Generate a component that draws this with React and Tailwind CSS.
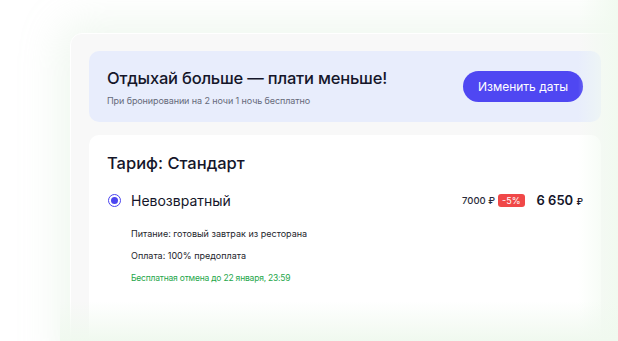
import React from 'react';

export default function App() {
  return (
    <div className="relative w-[618px] h-[341px] overflow-hidden bg-white" style={{ fontFamily: 'Inter, "Noto Sans", sans-serif' }}>
      {/* Outer panel */}
      <div className="absolute left-[70px] top-[33px] w-[580px] h-[340px] rounded-[12px] bg-[#f8f8f8] border border-white shadow-[0_0_40px_10px_rgba(190,225,190,0.25)] pt-[17px] pl-[18px]">
        {/* Promo banner */}
        <div className="w-[512px] h-[71px] rounded-[10px] bg-[#e8edfc] flex items-center justify-between pl-[18px] pr-[18px]">
          <div className="flex flex-col">
            <span className="text-[16.5px] font-medium text-[#15162a] leading-[22px] tracking-[-0.2px]">Отдыхай больше — плати меньше!</span>
            <span className="text-[9px] text-[#666a7a] mt-[6px] leading-[12px] tracking-[-0.1px]">При бронировании на 2 ночи 1 ночь бесплатно</span>
          </div>
          <button className="w-[120px] h-[31px] rounded-full bg-[#4f47f2] text-white text-[12px] leading-none">Изменить даты</button>
        </div>

        {/* Tariff card */}
        <div className="mt-[13px] w-[512px] h-[260px] rounded-[10px] bg-white pt-[17px] pl-[18px] pr-[18px]">
          <div className="text-[16.5px] font-medium text-[#15162a] leading-[22px]">Тариф: Стандарт</div>
          <div className="mt-[17px] flex items-center justify-between">
            <div className="flex items-center">
              <div className="w-[13px] h-[13px] rounded-full border-[1.5px] border-[#4b45f0] flex items-center justify-center ml-[1px]">
                <div className="w-[7px] h-[7px] rounded-full bg-[#4b45f0]" />
              </div>
              <span className="ml-[10px] text-[14px] text-[#15162a] leading-[18px]">Невозвратный</span>
            </div>
            <div className="flex items-center">
              <span className="text-[9.5px] font-medium text-[#2a2b3a]">7000 ₽</span>
              <span className="ml-[3px] h-[13px] px-[4px] rounded-[3px] bg-[#f04848] text-white text-[9px] leading-[13px]">-5%</span>
              <span className="ml-[12px] text-[13px] font-semibold text-[#15162a]">6 650 <span className="text-[9px]">₽</span></span>
            </div>
          </div>
          <div className="ml-[24px] mt-[17px] flex flex-col gap-[10px] text-[9px] leading-[12px]">
            <span className="text-[#1d1e2c]">Питание: готовый завтрак из ресторана</span>
            <span className="text-[#1d1e2c]">Оплата: 100% предоплата</span>
            <span className="text-[#1ea64a] text-[8.5px] tracking-[-0.2px]">Бесплатная отмена до 22 января, 23:59</span>
          </div>
        </div>
      </div>

      {/* Right fade */}
      <div className="absolute right-0 top-0 w-[40px] h-full bg-gradient-to-r from-transparent to-[#f1faf0]" />
      {/* Bottom fade */}
      <div className="absolute left-[60px] right-0 bottom-0 h-[40px] bg-gradient-to-b from-transparent to-[#f0f9ef]" />
    </div>
  );
}
